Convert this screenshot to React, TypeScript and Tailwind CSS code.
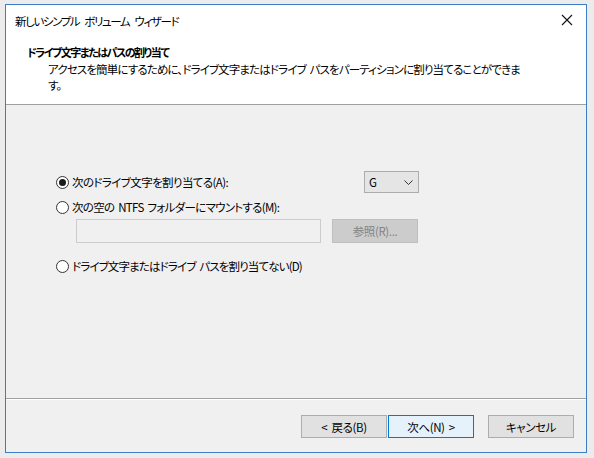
import React from "react";

const font = "font-['Yu_Gothic_UI','Noto_Sans_CJK_JP',sans-serif] [font-feature-settings:'palt'] [word-spacing:2px]";

function Radio({ checked, label, tight }: { checked?: boolean; label: string; tight?: string }) {
  return (
    <div className="flex items-center h-[16px]">
      <span className="w-[13px] h-[13px] rounded-full border border-[#333333] bg-white flex items-center justify-center shrink-0">
        {checked && <span className="w-[7px] h-[7px] rounded-full bg-[#1a1a1a]" />}
      </span>
      <span className={`ml-[3px] whitespace-nowrap ${tight ?? ""}`}>{label}</span>
    </div>
  );
}

function Button({ children, primary }: { children: React.ReactNode; primary?: boolean }) {
  return (
    <div
      className={`w-[86px] h-[23px] flex items-center justify-center border ${
        primary ? "border-[#0078d7] bg-[#e5f1fb]" : "border-[#adadad] bg-[#e1e1e1]"
      }`}
    >
      {children}
    </div>
  );
}

export default function App() {
  return (
    <div className={`w-[594px] h-[458px] bg-[#ececec] pt-[4px] pl-[5px] text-[11.5px] leading-[16px] tracking-[-0.4px] text-black ${font}`}>
      <div className="w-[582px] h-[449px] border border-[#3b7ec6] bg-[#f0f0f0] flex flex-col">
        {/* title bar */}
        <div className="h-[30px] bg-white flex items-center justify-between pl-[9px] pr-[9px] shrink-0">
          <span className="mt-[1px] tracking-[-1.4px] [word-spacing:4px]">新しいシンプル ボリューム ウィザード</span>
          <svg width="12" height="12" viewBox="0 0 12 12" className="mr-[4px]">
            <path d="M1 1 L11 11 M11 1 L1 11" stroke="#111" strokeWidth="1.1" />
          </svg>
        </div>

        {/* header */}
        <div className="h-[69px] bg-white pt-[9px] pl-[21px] shrink-0">
          <div className="font-bold text-[11px] tracking-[-1.5px]">ドライブ文字またはパスの割り当て</div>
          <div className="pl-[21px] pt-[1px] tracking-[-0.85px]">
            アクセスを簡単にするために、ドライブ文字またはドライブ パスをパーティションに割り当てることができま
            <br />
            す。
          </div>
        </div>
        <div className="h-px bg-[#a0a0a0] shrink-0" />

        {/* body */}
        <div className="flex-1 pl-[50px] pt-[66px] pr-[168px]">
          <div className="flex items-center justify-between h-[22px]">
            <Radio checked label="次のドライブ文字を割り当てる(A):" tight="tracking-[-0.6px]" />
            <div className="w-[55px] h-[22px] border border-[#adadad] bg-[#e5e5e5] flex items-center justify-between pl-[4px] pr-[5px] -mr-[1px]">
              <span>G</span>
              <svg width="9" height="5" viewBox="0 0 9 5">
                <path d="M0.5 0.5 L4.5 4.5 L8.5 0.5" fill="none" stroke="#333" strokeWidth="1" />
              </svg>
            </div>
          </div>
          <div className="mt-[6px]">
            <Radio label="次の空の NTFS フォルダーにマウントする(M):" tight="tracking-[-0.7px]" />
          </div>
          <div className="flex items-center mt-[4px] pl-[20px]">
            <div className="w-[245px] h-[24px] border border-[#cccccc] bg-[#f0f0f0]" />
            <div className="ml-[11px] w-[86px] h-[24px] border border-[#bfbfbf] bg-[#cccccc] text-[#838383] flex items-center justify-center">
              参照(R)...
            </div>
          </div>
          <div className="mt-[15px]">
            <Radio label="ドライブ文字またはドライブ パスを割り当てない(D)" tight="tracking-[-0.85px]" />
          </div>
        </div>

        {/* footer */}
        <div className="h-px bg-[#a0a0a0] shrink-0" />
        <div className="h-px bg-white shrink-0" />
        <div className="h-[52px] flex items-start justify-end pt-[15px] pr-[12px] shrink-0">
          <Button>&lt; 戻る(B)</Button>
          <div className="ml-[1px]">
            <Button primary>次へ(N) &gt;</Button>
          </div>
          <div className="ml-[14px]">
            <Button>キャンセル</Button>
          </div>
        </div>
      </div>
    </div>
  );
}
